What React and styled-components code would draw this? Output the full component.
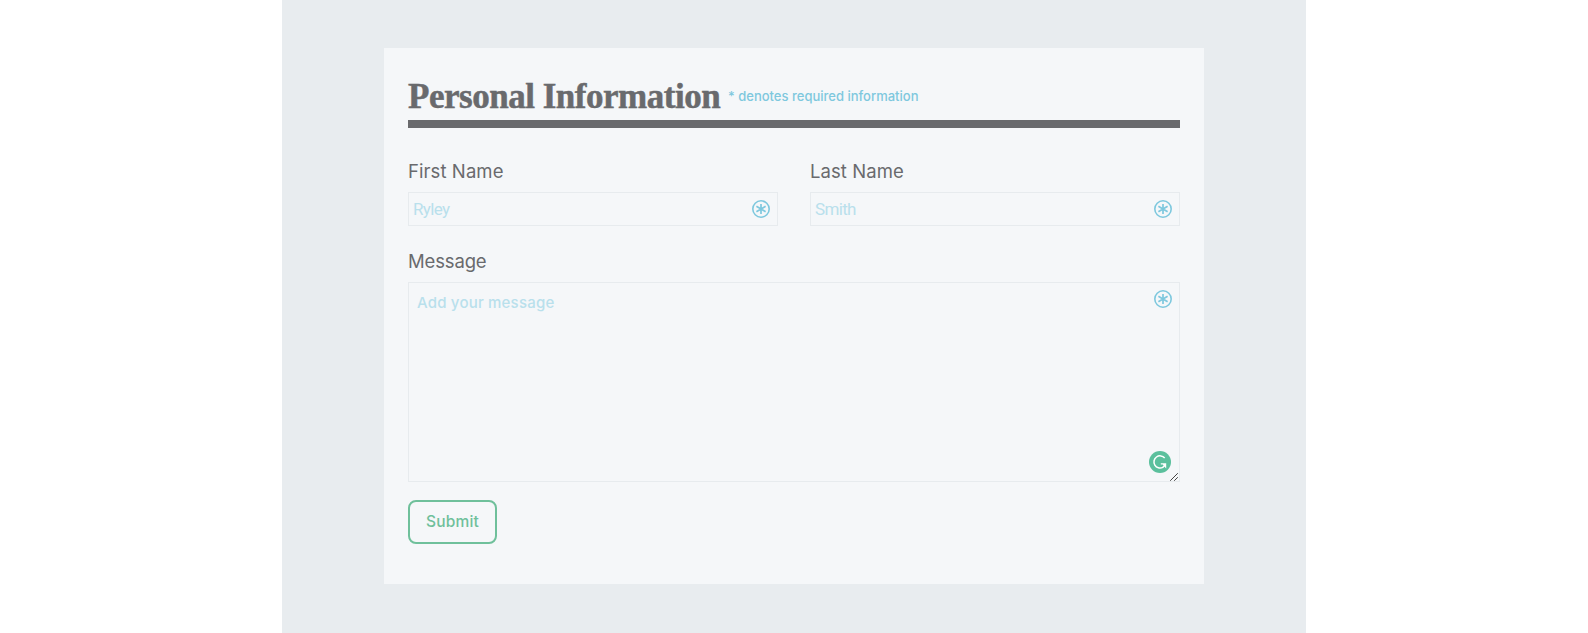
import React from "react";
import styled, { createGlobalStyle } from "styled-components";

const GlobalStyle = createGlobalStyle`
  * { box-sizing: border-box; }
  body { margin: 0; background: #fff; font-family: Inter, "Liberation Sans", sans-serif; }
`;

const Page = styled.main`
  width: 1024px;
  height: 633px;
  margin: 0 auto;
  padding-top: 48px;
  background: #e8ecef;
`;

const Card = styled.form`
  width: 820px;
  height: 536px;
  margin: 0 auto;
  padding: 24px;
  background: #f5f7f9;
`;

const Header = styled.header`
  display: flex;
  align-items: center;
  height: 56px;
  border-bottom: 8px solid #696a6d;
`;

const Title = styled.h1`
  width: 320px;
  margin: 0;
  padding-top: 1px;
  color: #696a6d;
  font: bold 35px/46px "Liberation Serif", serif;
  letter-spacing: -0.48px;
  -webkit-text-stroke: 0.5px #696a6d;
  white-space: nowrap;
`;

const Hint = styled.span`
  padding-bottom: 1px;
  color: #7ec8de;
  font-size: 13px;
  font-weight: 500;
  line-height: 20px;
  white-space: nowrap;
`;

const Row = styled.div`
  display: grid;
  grid-template-columns: 1fr 1fr;
  gap: 32px;
  margin-top: 29px;
`;

const Field = styled.label`
  display: block;
  margin-top: ${(p) => p.$top || 0}px;
`;

const LabelText = styled.span`
  display: block;
  height: 35px;
  color: #696a6d;
  font-size: 18.5px;
  line-height: 28px;
  letter-spacing: ${(p) => p.$spacing || 0}px;
`;

const Control = styled.div`
  position: relative;
  height: ${(p) => p.$height}px;
`;

const Input = styled.input`
  display: block;
  width: 100%;
  height: 34px;
  margin: 0;
  padding: 0 4px 1px;
  border: 1px solid #e7ebee;
  border-radius: 0;
  background: transparent;
  font: 17px Roboto, sans-serif;
  letter-spacing: -0.65px;
  &::placeholder { color: #b9e0ec; opacity: 1; }
`;

const TextArea = styled.textarea`
  display: block;
  width: 100%;
  height: 200px;
  margin: 0;
  padding: 8px;
  border: 1px solid #e7ebee;
  border-radius: 0;
  background: transparent;
  font: 500 15px/24px Inter, sans-serif;
  letter-spacing: 0.2px;
  resize: both;
  &::placeholder { color: #b9e0ec; opacity: 1; }
  &::-webkit-resizer { background: transparent; }
`;

const Grip = styled.svg`
  position: absolute;
  right: 2px;
  bottom: 1px;
  width: 8px;
  height: 8px;
  pointer-events: none;
`;

const RequiredMark = styled.svg`
  position: absolute;
  top: 8px;
  right: 8px;
  width: 18px;
  height: 18px;
`;

const AssistantBadge = styled.svg`
  position: absolute;
  right: 9px;
  bottom: 9px;
  width: 22px;
  height: 22px;
`;

const Submit = styled.button`
  display: block;
  width: 89px;
  height: 44px;
  margin-top: 18px;
  padding: 0 0 1px;
  border: 2px solid #6fc09b;
  border-radius: 8px;
  background: transparent;
  color: #6fc09b;
  font: 500 15.5px Inter, sans-serif;
  letter-spacing: 0.2px;
`;

const Required = () => (
  <RequiredMark viewBox="0 0 18 18" fill="none" stroke="#7ec8de" aria-hidden="true">
    <circle cx="9" cy="9" r="8.2" strokeWidth="1.6" />
    <path d="M9 4v10M4.4 6.3l9.2 5.4M13.6 6.3l-9.2 5.4" strokeWidth="1.7" />
  </RequiredMark>
);

const Assistant = () => (
  <AssistantBadge viewBox="0 0 22 22" fill="none" aria-hidden="true">
    <circle cx="11" cy="11" r="11" fill="#5bc09d" />
    <path d="M15.7 7A6.1 6.1 0 1 0 13.8 16.4L16 14" stroke="#fff" strokeWidth="1.5" />
    <path d="M11.8 12.2h5.4v5.2l-1.8-1.9-1.6-1.9h-2z" fill="#fff" />
  </AssistantBadge>
);

export default function App() {
  return (
    <>
      <GlobalStyle />
      <Page>
        <Card onSubmit={(e) => e.preventDefault()}>
          <Header>
            <Title>Personal Information</Title>
            <Hint>* denotes required information</Hint>
          </Header>
          <Row>
            <Field>
              <LabelText $spacing={0.08}>First Name</LabelText>
              <Control $height={34}>
                <Input placeholder="Ryley" />
                <Required />
              </Control>
            </Field>
            <Field>
              <LabelText $spacing={0.08}>Last Name</LabelText>
              <Control $height={34}>
                <Input placeholder="Smith" />
                <Required />
              </Control>
            </Field>
          </Row>
          <Field $top={21}>
            <LabelText $spacing={-0.15}>Message</LabelText>
            <Control $height={200}>
              <TextArea placeholder="Add your message" />
              <Required />
              <Assistant />
              <Grip viewBox="0 0 8 8" stroke="#444" aria-hidden="true">
                <path d="M.2 7.8L7.8.2M4.2 7.8l3.6-3.6" />
              </Grip>
            </Control>
          </Field>
          <Submit>Submit</Submit>
        </Card>
      </Page>
    </>
  );
}
